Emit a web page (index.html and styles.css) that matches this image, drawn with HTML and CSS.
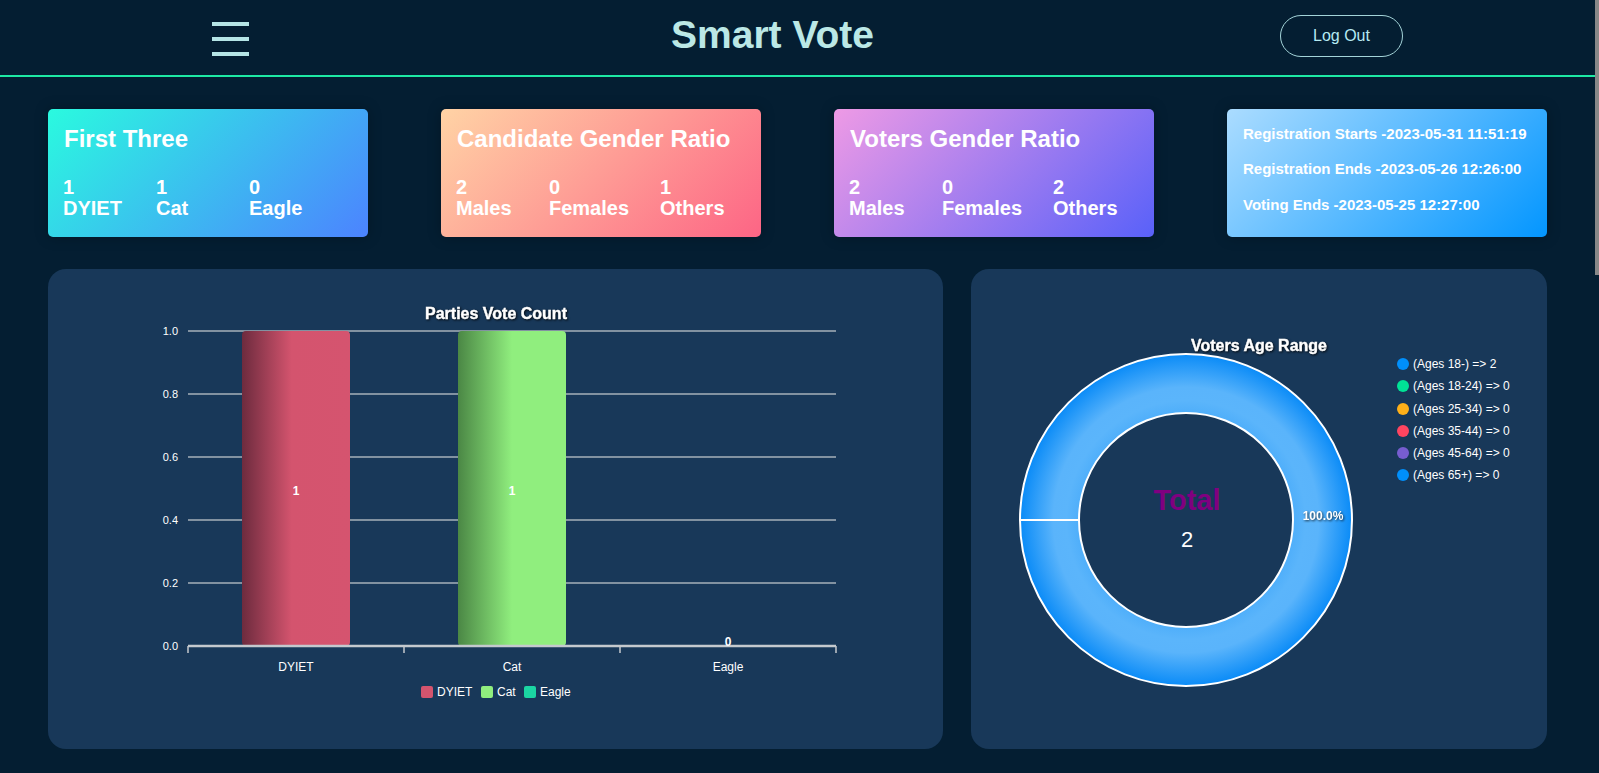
FILE: index.html
```html
<!DOCTYPE html>
<html lang="en">
<head>
<meta charset="utf-8">
<title>Smart Vote</title>
<link rel="stylesheet" href="styles.css">
</head>
<body>
<div class="scroll-thumb" aria-hidden="true"></div>
<header class="topbar">
  <div class="menu-icon" aria-label="Menu"><span></span><span></span><span></span></div>
  <h1 class="brand">Smart Vote</h1>
  <button class="logout">Log Out</button>
</header>

<main class="dashboard">
  <section class="stat-cards">
    <div class="card card-teal">
      <h2 class="card-title">First Three</h2>
      <div class="card-stats">
        <div class="stat">1<br>DYIET</div>
        <div class="stat">1<br>Cat</div>
        <div class="stat">0<br>Eagle</div>
      </div>
    </div>
    <div class="card card-peach">
      <h2 class="card-title">Candidate Gender Ratio</h2>
      <div class="card-stats">
        <div class="stat">2<br>Males</div>
        <div class="stat">0<br>Females</div>
        <div class="stat">1<br>Others</div>
      </div>
    </div>
    <div class="card card-violet">
      <h2 class="card-title">Voters Gender Ratio</h2>
      <div class="card-stats">
        <div class="stat">2<br>Males</div>
        <div class="stat">0<br>Females</div>
        <div class="stat">2<br>Others</div>
      </div>
    </div>
    <div class="card card-sky">
      <div class="card-dates">
        <p>Registration Starts -2023-05-31 11:51:19</p>
        <p>Registration Ends -2023-05-26 12:26:00</p>
        <p>Voting Ends -2023-05-25 12:27:00</p>
      </div>
    </div>
  </section>

  <section class="charts">
    <div class="panel">
      <svg class="chart" width="895" height="480" viewBox="0 0 895 480">
        <defs>
          <linearGradient id="gRed" x1="0" y1="0" x2="1" y2="0">
            <stop offset="0" stop-color="#6d2b3e"/>
            <stop offset="0.46" stop-color="#d4546e"/>
            <stop offset="1" stop-color="#d5546f"/>
          </linearGradient>
          <linearGradient id="gGreen" x1="0" y1="0" x2="1" y2="0">
            <stop offset="0" stop-color="#4b8745"/>
            <stop offset="0.5" stop-color="#90ee7e"/>
            <stop offset="1" stop-color="#90ee7e"/>
          </linearGradient>
        </defs>
        <text class="chart-title" x="448" y="50" text-anchor="middle">Parties Vote Count</text>

        <g class="grid">
          <line x1="140" y1="62" x2="788" y2="62"/>
          <line x1="140" y1="125" x2="788" y2="125"/>
          <line x1="140" y1="188" x2="788" y2="188"/>
          <line x1="140" y1="251" x2="788" y2="251"/>
          <line x1="140" y1="314" x2="788" y2="314"/>
        </g>
        <g class="ylabels" text-anchor="end">
          <text x="130" y="66">1.0</text>
          <text x="130" y="129">0.8</text>
          <text x="130" y="192">0.6</text>
          <text x="130" y="255">0.4</text>
          <text x="130" y="318">0.2</text>
          <text x="130" y="381">0.0</text>
        </g>

        <rect x="194" y="62" width="108" height="315" rx="4" fill="url(#gRed)"/>
        <rect x="410" y="62" width="108" height="315" rx="4" fill="url(#gGreen)"/>

        <g class="axis">
          <line x1="140" y1="377" x2="788" y2="377" class="axis-line"/>
          <line x1="140" y1="377" x2="140" y2="384"/>
          <line x1="356" y1="377" x2="356" y2="384"/>
          <line x1="572" y1="377" x2="572" y2="384"/>
          <line x1="788" y1="377" x2="788" y2="384"/>
        </g>

        <g class="bar-values" text-anchor="middle">
          <text x="248" y="226">1</text>
          <text x="464" y="226">1</text>
          <text x="680" y="377">0</text>
        </g>

        <g class="xlabels" text-anchor="middle">
          <text x="248" y="402">DYIET</text>
          <text x="464" y="402">Cat</text>
          <text x="680" y="402">Eagle</text>
        </g>

        <g class="legend">
          <rect x="373" y="417" width="12" height="12" rx="2" fill="#d4546e"/>
          <text x="389" y="427">DYIET</text>
          <rect x="433" y="417" width="12" height="12" rx="2" fill="#90ee7e"/>
          <text x="449" y="427">Cat</text>
          <rect x="476" y="417" width="12" height="12" rx="2" fill="#1bd6a3"/>
          <text x="492" y="427">Eagle</text>
        </g>
      </svg>
    </div>

    <div class="panel">
      <svg class="chart" width="576" height="480" viewBox="0 0 576 480">
        <defs>
          <radialGradient id="gDonut" gradientUnits="userSpaceOnUse" cx="215" cy="251" r="166">
            <stop offset="0.64" stop-color="#4eaefa"/>
            <stop offset="0.72" stop-color="#5bb5fb"/>
            <stop offset="0.80" stop-color="#5ab4fb"/>
            <stop offset="1" stop-color="#0a8bf7"/>
          </radialGradient>
        </defs>
        <text class="chart-title" x="288" y="82" text-anchor="middle">Voters Age Range</text>

        <path fill="url(#gDonut)" fill-rule="evenodd"
          d="M49 251 A166 166 0 1 0 381 251 A166 166 0 1 0 49 251 Z M108 251 A107 107 0 1 0 322 251 A107 107 0 1 0 108 251 Z"/>
        <circle cx="215" cy="251" r="166" class="ring"/>
        <circle cx="215" cy="251" r="107" class="ring"/>
        <line x1="49" y1="251" x2="108" y2="251" class="ring"/>

        <text class="donut-total" x="216" y="241" text-anchor="middle">Total</text>
        <text class="donut-value" x="216" y="278" text-anchor="middle">2</text>
        <text class="donut-pct" x="352" y="251" text-anchor="middle">100.0%</text>

        <g class="age-legend">
          <circle cx="432" cy="95" r="6" fill="#008ffb"/>
          <text x="442" y="99">(Ages 18-) =&gt; 2</text>
          <circle cx="432" cy="117" r="6" fill="#00e396"/>
          <text x="442" y="121">(Ages 18-24) =&gt; 0</text>
          <circle cx="432" cy="140" r="6" fill="#feb019"/>
          <text x="442" y="144">(Ages 25-34) =&gt; 0</text>
          <circle cx="432" cy="162" r="6" fill="#ff4560"/>
          <text x="442" y="166">(Ages 35-44) =&gt; 0</text>
          <circle cx="432" cy="184" r="6" fill="#775dd0"/>
          <text x="442" y="188">(Ages 45-64) =&gt; 0</text>
          <circle cx="432" cy="206" r="6" fill="#008ffb"/>
          <text x="442" y="210">(Ages 65+) =&gt; 0</text>
        </g>
      </svg>
    </div>
  </section>
</main>
</body>
</html>
```

FILE: styles.css
```css
html::-webkit-scrollbar {
  width: 4px;
}
html::-webkit-scrollbar-track {
  background: #041e32;
}
html::-webkit-scrollbar-thumb {
  background: #888888;
}

* {
  box-sizing: border-box;
}

body {
  margin: 0 4px 0 0;
  min-height: 2173px;
  background: #041e32;
  font-family: "Liberation Sans", Arial, sans-serif;
  color: #ffffff;
}

/* decorative scrollbar thumb drawn over the page edge */
.scroll-thumb {
  position: fixed;
  top: 0;
  right: 0;
  width: 4px;
  height: 275px;
  background: #888888;
}

/* ---------- header ---------- */
.topbar {
  display: flex;
  align-items: flex-start;
  height: 77px;
  padding: 0 192px 0 212px;
  border-bottom: 2px solid #1de9a4;
}

.menu-icon {
  display: flex;
  flex-direction: column;
  gap: 11px;
  margin-top: 22px;
}

.menu-icon span {
  display: block;
  width: 37px;
  height: 4px;
  background: #b5e5e6;
}

.brand {
  margin: 13px 0 0 422px;
  font-size: 39px;
  line-height: 1.15;
  font-weight: bold;
  color: #bbe8e6;
}

.logout {
  margin: 15px 0 0 auto;
  width: 123px;
  height: 42px;
  border: 1px solid #a3d3d8;
  border-radius: 21px;
  background: transparent;
  color: #b5eaf2;
  font-family: "Liberation Sans", Arial, sans-serif;
  font-size: 16px;
  padding: 0;
}

/* ---------- stat cards ---------- */
.stat-cards {
  display: flex;
  justify-content: space-between;
  padding: 32px 48px 0;
}

.card {
  width: 320px;
  border-radius: 5px;
  padding: 16px 16px 18px;
  box-shadow: 0 0 14px rgba(0, 0, 0, 0.25);
}

.card-teal   { background: linear-gradient(135deg, #2afadf 0%, #4c83ff 100%); }
.card-peach  { background: linear-gradient(135deg, #ffd3a5 0%, #fd6585 100%); }
.card-violet { background: linear-gradient(135deg, #ee9ae5 0%, #5961f9 100%); }
.card-sky    { background: linear-gradient(135deg, #abdcff 0%, #0396ff 100%); }

.card-title {
  margin: 0;
  font-size: 24px;
  line-height: 1.15;
  font-weight: bold;
}

.card-stats {
  display: flex;
  gap: 31px;
  margin-top: 24px;
  margin-left: -1px;
  font-size: 20px;
  line-height: 21px;
  font-weight: bold;
}

.stat {
  min-width: 62px;
}

.card-dates {
  display: flex;
  flex-direction: column;
  gap: 18px;
  font-size: 15px;
  font-weight: bold;
  line-height: 1.15;
}

.card-dates p {
  margin: 0;
}

/* ---------- charts ---------- */
.charts {
  display: grid;
  grid-template-columns: 895fr 576fr;
  gap: 28px;
  padding: 32px 48px 0;
}

.panel {
  height: 480px;
  border-radius: 18px;
  background: #183859;
  overflow: hidden;
}

.chart {
  display: block;
  font-family: "Liberation Sans", Arial, sans-serif;
}

.chart-title {
  font-size: 16px;
  font-weight: bold;
  fill: #ffffff;
  stroke: #ffffff;
  stroke-width: 0.4px;
  filter: drop-shadow(1px 1px 1px rgba(0, 0, 0, 0.8));
}

.grid line {
  stroke: #a6b0ba;
  stroke-width: 1.3px;
}

.ylabels text {
  font-size: 11px;
  fill: #ffffff;
}

.axis line {
  stroke: #c4c9ce;
  stroke-width: 1.5px;
}

.axis .axis-line {
  stroke-width: 2.5px;
}

.bar-values text {
  font-size: 12px;
  font-weight: bold;
  fill: #ffffff;
}

.xlabels text,
.legend text {
  font-size: 12px;
  fill: #ffffff;
}

.ring {
  fill: none;
  stroke: #ffffff;
  stroke-width: 2px;
}

.donut-total {
  font-size: 29px;
  font-weight: bold;
  fill: #800080;
}

.donut-value {
  font-size: 22px;
  fill: #ffffff;
}

.donut-pct {
  font-size: 12px;
  font-weight: bold;
  fill: #ffffff;
  filter: drop-shadow(1px 1px 1px rgba(0, 0, 0, 0.7));
}

.age-legend text {
  font-size: 12px;
  fill: #ffffff;
}
```
